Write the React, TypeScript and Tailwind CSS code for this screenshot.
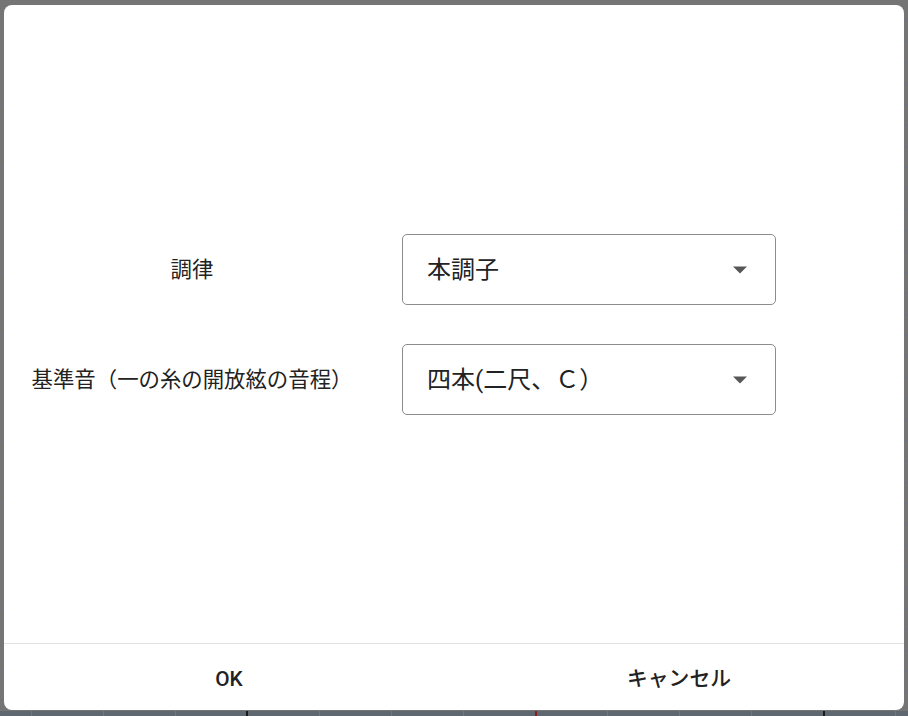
import React from "react";

const font = { fontFamily: 'Roboto, "Noto Sans CJK JP", sans-serif' };

function Caret() {
  return (
    <svg width="16" height="8" viewBox="0 0 16 8" className="shrink-0">
      <polygon points="1,0.5 15,0.5 8,7.5" fill="#575757" />
    </svg>
  );
}

function SelectBox({ value }: { value: string }) {
  return (
    <div className="flex h-[71px] w-[374px] items-center justify-between rounded-[5px] border border-[#8c8c8c] pl-[24px] pr-[27px]">
      <span className="text-[24px] leading-none text-[#222]">{value}</span>
      <Caret />
    </div>
  );
}

function Row({ label, value }: { label: string; value: string }) {
  return (
    <div className="flex items-center gap-[30px] pl-[8px]">
      <div className="w-[360px] text-center text-[21.4px] leading-none text-[#222]">{label}</div>
      <SelectBox value={value} />
    </div>
  );
}

export default function App() {
  const ticks = [31, 103, 175, 319, 391, 463, 607, 679, 751, 895];
  return (
    <div className="relative h-[716px] w-[908px] overflow-hidden bg-[#757575]" style={font}>
      <div className="absolute inset-0 bg-[repeating-linear-gradient(to_bottom,transparent_0px,transparent_20px,#6b7480_20px,#6b7480_21px)]" />
      <div className="absolute left-0 right-0 top-[711px] h-[5px] bg-[#5f6871]">
        {ticks.map((x) => (
          <div key={x} className="absolute top-0 h-[5px] w-px bg-[#6e7780]" style={{ left: x }} />
        ))}
        <div className="absolute left-[246px] top-0 h-[5px] w-[2px] bg-[#1a1a1a]" />
        <div className="absolute left-[535px] top-0 h-[5px] w-[2px] bg-[#8a1c1c]" />
        <div className="absolute left-[823px] top-0 h-[5px] w-[2px] bg-[#1a1a1a]" />
      </div>
      <div className="relative pl-[4px] pt-[5px]">
        <div className="flex h-[705px] w-[900px] flex-col overflow-hidden rounded-[8px] bg-white">
          <div className="flex flex-1 flex-col justify-center gap-[39px] pt-[1px]">
            <Row label="調律" value="本調子" />
            <Row label="基準音（一の糸の開放絃の音程）" value="四本(二尺、Ｃ）" />
          </div>
          <div className="h-px bg-[#e2e2e2]" />
          <div className="flex h-[66px]">
            <div className="flex flex-1 items-center justify-center pt-[6px] text-[20.8px] font-medium text-[#222]">OK</div>
            <div className="flex flex-1 items-center justify-center pt-[6px] text-[20.8px] font-medium text-[#222]">キャンセル</div>
          </div>
        </div>
      </div>
    </div>
  );
}
